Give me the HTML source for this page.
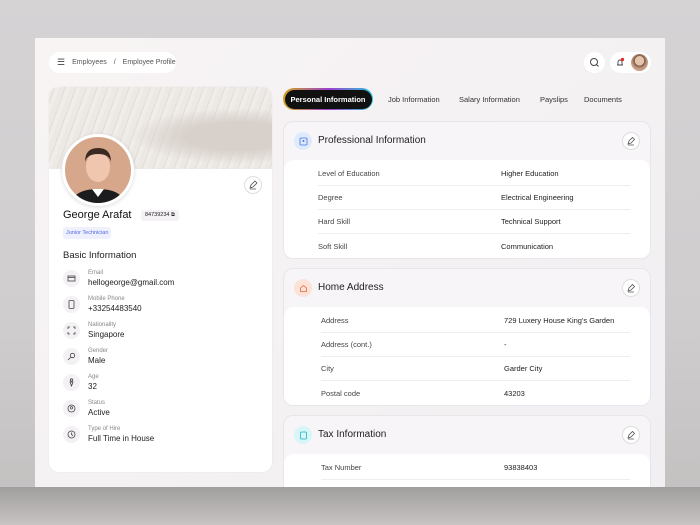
<!DOCTYPE html>
<html><head><style>
*{margin:0;padding:0;box-sizing:border-box}
body{width:700px;height:525px;overflow:hidden;font-family:"Liberation Sans",sans-serif;background:linear-gradient(#d5d3d4,#cfcdce 60%,#c2bfbf);position:relative;color:#222}
.frame{position:absolute;left:35px;top:38px;width:630px;height:449px;background:linear-gradient(135deg,#f8f4f4,#f1eff2);overflow:hidden}
.bot{position:absolute;left:0;top:487px;width:700px;height:38px;background:linear-gradient(#a09d9d,#c8c4c4)}
.a{position:absolute}
.crumb{left:14px;top:14px;width:127px;height:21px;background:#fff;border-radius:11px;font-size:7px;color:#555;display:flex;align-items:center;padding-left:8px;gap:7px}
.left{left:14px;top:49px;width:223px;height:385px;background:#fff;border-radius:10px;overflow:hidden;box-shadow:0 0 2px rgba(0,0,0,.06)}
.cover{height:82px;background:radial-gradient(ellipse at 85% 60%,#d8d1cb 0 20%,transparent 40%),repeating-linear-gradient(110deg,#ece8e4 0 5px,#e2dcd6 5px 6px,#f0ece9 6px 10px);}
.av{left:13px;top:47px;width:72px;height:72px;border-radius:50%;background:#d6a78a;border:3px solid #fff;box-shadow:0 1px 4px rgba(0,0,0,.15);overflow:hidden}
.circ{border:1px solid #ddd;border-radius:50%;background:#fff}
.lbl{font-size:6px;color:#888}
.val{font-size:8px;color:#222;margin-top:2px}
.ic{width:17px;height:17px;border-radius:50%;background:#f3f1f3;display:flex;align-items:center;justify-content:center}
.tab{font-size:7.5px;color:#333;top:95px}
.card{left:248px;width:368px;background:#f7f5f7;border-radius:10px;border:1px solid #e8e6ea;overflow:hidden}
.card .hd{height:38px;position:relative}
.card .bd{background:#fff;border-radius:10px;height:100px;position:relative}
.row{position:absolute;left:34px;right:20px;height:24px;font-size:7.5px;color:#444;border-bottom:1px solid #eee;display:flex;align-items:center}
.row span:last-child{position:absolute;left:183px;color:#222}
.ttl{position:absolute;left:34px;top:13px;font-size:10px;color:#222}
.hi{position:absolute;left:10px;top:10px;width:18px;height:18px;border-radius:50%;display:flex;align-items:center;justify-content:center}
.ed{position:absolute;right:10px;top:10px;width:18px;height:18px;display:flex;align-items:center;justify-content:center}
</style></head><body>
<div class="frame">
 <div class="a crumb"><span style="font-size:9px;color:#444">☰</span><span>Employees</span><span>/</span><span>Employee Profile</span></div>
 <div class="a circ" style="left:549px;top:14px;width:21px;height:21px;border:none"><svg width="21" height="21"><circle cx="10" cy="10" r="3.5" fill="none" stroke="#444" stroke-width="1"/><line x1="12.5" y1="12.5" x2="14.5" y2="14.5" stroke="#444"/></svg></div>
 <div class="a" style="left:575px;top:14px;width:41px;height:21px;background:#fff;border-radius:11px"><svg width="20" height="21"><path d="M7 13h6M8 13v-3a2 2 0 0 1 4 0v3" fill="none" stroke="#444" stroke-width=".9"/><circle cx="12.5" cy="7.5" r="1.6" fill="#e22"/></svg><div style="position:absolute;left:21px;top:2px;width:17px;height:17px;border-radius:50%;background:radial-gradient(circle at 50% 40%,#e6c3ab 35%,#7a5a4a 36%,#c99d84 60%)"></div></div>
 <div class="a left">
  <div class="cover"></div>
  <div class="a av"><svg width="66" height="66"><ellipse cx="33" cy="30" rx="12" ry="15" fill="#f0c7ae"/><path d="M20 25q0-14 13-14t13 14q-2-8-13-8t-13 8z" fill="#3a2a22"/><path d="M6 66q4-14 27-14t27 14z" fill="#1c1c1e"/><path d="M27 52l6 8 6-8z" fill="#fff"/></svg></div>
  <div class="a circ" style="left:195px;top:89px;width:18px;height:18px"><svg width="16" height="16"><path d="M5 11l1-3 4-4 2 2-4 4z M5 12h6" fill="none" stroke="#555" stroke-width=".8"/></svg></div>
  <div class="a" style="left:14px;top:122px;font-size:11px;color:#111">George Arafat</div>
  <div class="a" style="left:92px;top:123px;font-size:5.5px;background:#f4f2f4;border-radius:3px;padding:2px 4px">84739234 ⧉</div>
  <div class="a" style="left:14px;top:140px;font-size:5.5px;color:#5468e0;background:#eef0fd;border-radius:3px;padding:3px 3px">Junior Technician</div>
  <div class="a" style="left:14px;top:163px;font-size:9.5px;color:#222">Basic Information</div>
  <div class="a" style="left:14px;top:183px">
   <div style="display:flex;flex-direction:column;gap:9px">
    <div style="display:flex;gap:8px"><div class="ic"><svg width="9" height="9"><rect x="1" y="2" width="7" height="5" fill="none" stroke="#444" stroke-width=".8"/><path d="M1 3.5h7" stroke="#444" stroke-width=".8"/></svg></div><div><div class="lbl">Email</div><div class="val">hellogeorge@gmail.com</div></div></div>
    <div style="display:flex;gap:8px"><div class="ic"><svg width="9" height="9"><rect x="2" y=".5" width="5" height="8" rx="1" fill="none" stroke="#444" stroke-width=".8"/></svg></div><div><div class="lbl">Mobile Phone</div><div class="val">+33254483540</div></div></div>
    <div style="display:flex;gap:8px"><div class="ic"><svg width="9" height="9"><path d="M1 3V1h2M6 1h2v2M8 6v2H6M3 8H1V6" fill="none" stroke="#444" stroke-width=".8"/></svg></div><div><div class="lbl">Nationality</div><div class="val">Singapore</div></div></div>
    <div style="display:flex;gap:8px"><div class="ic"><svg width="9" height="9"><circle cx="5.5" cy="3.5" r="2.2" fill="none" stroke="#444" stroke-width=".8"/><path d="M4 5L1 8" stroke="#444" stroke-width=".8"/></svg></div><div><div class="lbl">Gender</div><div class="val">Male</div></div></div>
    <div style="display:flex;gap:8px"><div class="ic"><svg width="9" height="9"><circle cx="4.5" cy="2" r="1.2" fill="none" stroke="#444" stroke-width=".8"/><path d="M3 4h3L4.5 8z" fill="none" stroke="#444" stroke-width=".8"/></svg></div><div><div class="lbl">Age</div><div class="val">32</div></div></div>
    <div style="display:flex;gap:8px"><div class="ic"><svg width="9" height="9"><circle cx="4.5" cy="4.5" r="3.5" fill="none" stroke="#444" stroke-width=".8"/><circle cx="4.5" cy="3.8" r="1.2" fill="none" stroke="#444" stroke-width=".7"/></svg></div><div><div class="lbl">Status</div><div class="val">Active</div></div></div>
    <div style="display:flex;gap:8px"><div class="ic"><svg width="9" height="9"><circle cx="4.5" cy="4.5" r="3.5" fill="none" stroke="#444" stroke-width=".8"/><path d="M4.5 2.5v2l1.5 1" fill="none" stroke="#444" stroke-width=".8"/></svg></div><div><div class="lbl">Type of Hire</div><div class="val">Full Time in House</div></div></div>
   </div>
  </div>
 </div>
 <div class="a" style="left:248px;top:50px;width:90px;height:22px;border-radius:11px;background:linear-gradient(90deg,#d4a317,#9d3fd0,#2bc3d8);padding:1.5px"><div style="background:#111;border-radius:10px;height:100%;color:#fff;font-size:7.5px;font-weight:bold;display:flex;align-items:center;justify-content:center">Personal Information</div></div>
 <div class="a tab" style="left:353px;top:57px">Job Information</div>
 <div class="a tab" style="left:424px;top:57px">Salary Information</div>
 <div class="a tab" style="left:505px;top:57px">Payslips</div>
 <div class="a tab" style="left:549px;top:57px">Documents</div>

 <div class="a card" style="top:83px;height:138px"><div class="hd"><div class="hi" style="background:#deebfd"><svg width="9" height="9"><rect x="1" y="1" width="7" height="7" rx="1" fill="none" stroke="#4a72d8" stroke-width=".8"/><circle cx="4.5" cy="4" r="1" fill="#4a72d8"/></svg></div><div class="ttl">Professional Information</div><div class="ed circ"><svg width="12" height="12"><path d="M3 9l1-3 3.5-3.5 2 2L6 8z M3 10h6" fill="none" stroke="#555" stroke-width=".8"/></svg></div></div>
  <div class="bd"><div class="row" style="top:2px"><span>Level of Education</span><span>Higher Education</span></div><div class="row" style="top:26px"><span>Degree</span><span>Electrical Engineering</span></div><div class="row" style="top:50px"><span>Hard Skill</span><span>Technical Support</span></div><div class="row" style="top:74px;border:none"><span>Soft Skill</span><span>Communication</span></div></div></div>
 <div class="a card" style="top:230px;height:138px"><div class="hd"><div class="hi" style="background:#fde2d8"><svg width="9" height="9"><path d="M1.5 4L4.5 1.5 7.5 4v3.5h-6z" fill="none" stroke="#e8643a" stroke-width=".8"/></svg></div><div class="ttl">Home Address</div><div class="ed circ"><svg width="12" height="12"><path d="M3 9l1-3 3.5-3.5 2 2L6 8z M3 10h6" fill="none" stroke="#555" stroke-width=".8"/></svg></div></div>
  <div class="bd"><div class="row" style="top:2px;left:37px"><span>Address</span><span>729 Luxery House King's Garden</span></div><div class="row" style="top:26px;left:37px"><span>Address (cont.)</span><span>-</span></div><div class="row" style="top:50px;left:37px"><span>City</span><span>Garder City</span></div><div class="row" style="top:74px;left:37px;border:none"><span>Postal code</span><span>43203</span></div></div></div>
 <div class="a card" style="top:377px;height:90px"><div class="hd"><div class="hi" style="background:#d6f6f8"><svg width="9" height="9"><rect x="1.5" y="1" width="6" height="7" rx="1" fill="none" stroke="#1fb3c4" stroke-width=".8"/></svg></div><div class="ttl">Tax Information</div><div class="ed circ"><svg width="12" height="12"><path d="M3 9l1-3 3.5-3.5 2 2L6 8z M3 10h6" fill="none" stroke="#555" stroke-width=".8"/></svg></div></div>
  <div class="bd"><div class="row" style="top:2px;left:37px"><span>Tax Number</span><span>93838403</span></div></div></div>
</div>
<div class="bot"></div>
</body></html>
